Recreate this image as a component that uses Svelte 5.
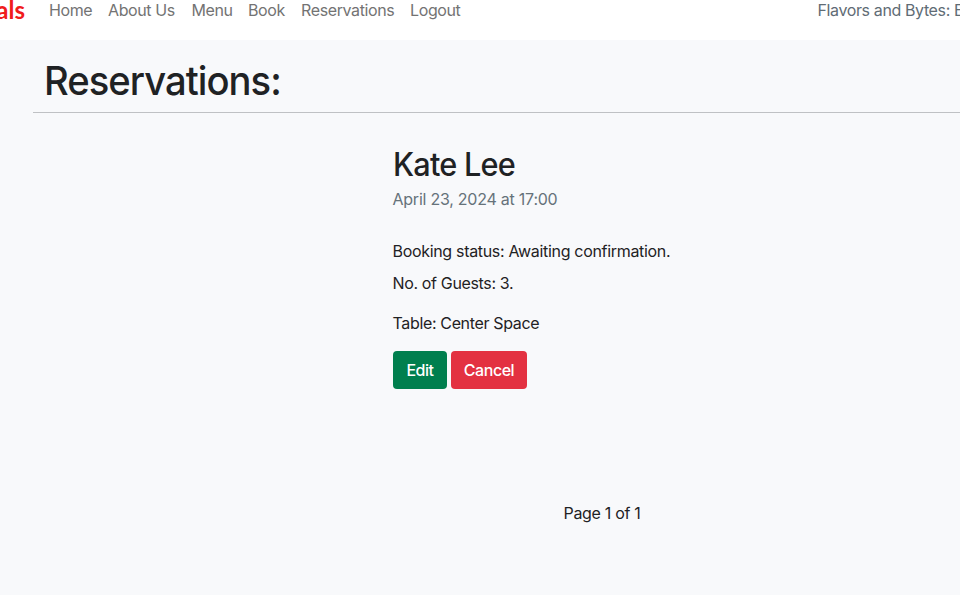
<script>
  const links = [
    { label: 'Home', width: 43 },
    { label: 'About Us', width: 67.5 },
    { label: 'Menu', width: 40.5 },
    { label: 'Book', width: 37 },
    { label: 'Reservations', width: 93 },
    { label: 'Logout', width: 51 }
  ];
</script>

<div class="page">
  <nav>
    <a class="brand" href="#top">als</a>
    <ul>
      {#each links as link}
        <li style="width: {link.width}px"><a href="#top">{link.label}</a></li>
      {/each}
    </ul>
    <span class="tagline">Flavors and Bytes: Epic</span>
  </nav>
  <main>
    <h1>Reservations:</h1>
    <hr />
    <section>
      <h2>Kate Lee</h2>
      <h6>April 23, 2024 at 17:00</h6>
      <p class="status">Booking status: Awaiting confirmation.</p>
      <p class="guests">No. of Guests: 3.</p>
      <p class="table">Table: Center Space</p>
      <div class="actions">
        <button class="edit">Edit</button>
        <button class="cancel">Cancel</button>
      </div>
    </section>
    <footer>Page 1 of 1</footer>
  </main>
</div>

<style>
  .page {
    width: 960px;
    height: 595px;
    overflow: hidden;
    background: #f8f9fb;
    color: #1f2224;
    font: 400 16px/24px Inter, sans-serif;
    letter-spacing: -0.35px;
  }
  nav {
    display: flex;
    height: 40px;
    background: #fff;
    white-space: nowrap;
  }
  a {
    color: #737373;
    text-decoration: none;
  }
  .brand {
    width: 25px;
    display: flex;
    justify-content: flex-end;
    flex: none;
    color: #f01c1c;
    font: 700 24px/20px Lato, sans-serif;
    letter-spacing: 0;
  }
  ul {
    display: flex;
    gap: 16px;
    list-style: none;
    margin: -2px 0 0 24px;
    padding: 0;
    letter-spacing: -0.38px;
  }
  .tagline {
    width: 142.5px;
    flex: none;
    margin: -2px 0 0 auto;
    color: #5f6c75;
    letter-spacing: -0.38px;
  }
  h1,
  h2,
  h6,
  p {
    margin: 0;
    font-weight: 400;
  }
  h1 {
    margin-left: 42px;
    padding: 17px 0 7px 2px;
    font-size: 40px;
    line-height: 48px;
    font-weight: 550;
    letter-spacing: -1px;
    transform: scaleX(0.955);
    transform-origin: 0 0;
  }
  hr {
    height: 1px;
    margin: 0 0 0 33px;
    border: 0;
    background: #bfc1c4;
  }
  section {
    padding: 33px 0 0 392.5px;
  }
  h2 {
    font-size: 32px;
    line-height: 38px;
    font-weight: 550;
    letter-spacing: -0.8px;
    transform: scaleX(0.958);
    transform-origin: 0 0;
  }
  h6 {
    margin-top: 3px;
    font-size: 16px;
    color: #66727a;
    letter-spacing: -0.24px;
  }
  .status {
    margin-top: 28px;
    letter-spacing: -0.32px;
  }
  .guests {
    margin-top: 8px;
  }
  .table {
    margin-top: 16px;
  }
  .actions {
    display: flex;
    gap: 4px;
    margin: 16px 0 0 0.5px;
  }
  button {
    height: 38px;
    padding: 0;
    border: 0;
    border-radius: 4px;
    color: #fff;
    font: 500 16px/38px Inter, sans-serif;
    letter-spacing: -0.45px;
  }
  .edit {
    width: 54px;
    background: #007f4e;
  }
  .cancel {
    width: 76px;
    background: #e33141;
  }
  footer {
    margin: 112px 0 0 563.5px;
    letter-spacing: -0.3px;
  }
</style>
